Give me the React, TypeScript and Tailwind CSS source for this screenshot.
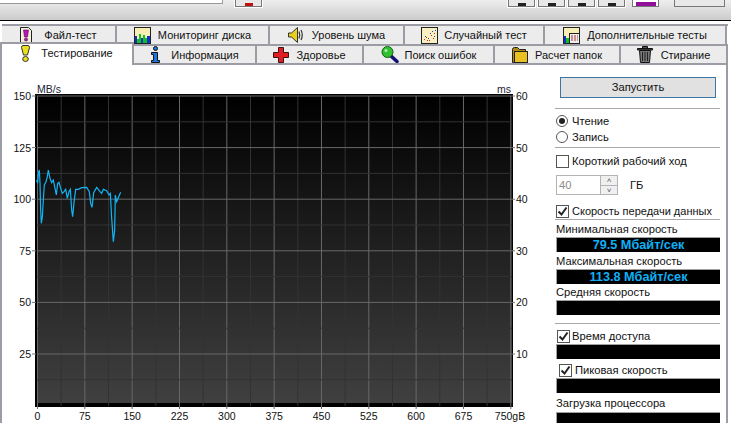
import type { ReactNode } from 'react';

const font = { fontFamily: '"Liberation Sans", Arial, sans-serif' };

const FileIcon = () => (
  <svg width="12" height="17" viewBox="0 0 12 17">
    <path d="M.5 .5h8l3 3v13h-11z" fill="#f4f0dc" stroke="#222" />
    <path d="M3.500 3h5l-1 7h-3z" fill="#c010c0" stroke="#401040" strokeWidth=".6" />
    <circle cx="6" cy="12.500" r="1.600" fill="#c010c0" stroke="#401040" strokeWidth=".6" />
  </svg>
);

const MonitorIcon = () => (
  <svg width="17" height="17" viewBox="0 0 17 17">
    <rect x=".5" y=".5" width="16" height="16" fill="#f6eeb4" stroke="#222" />
    <rect x="1" y="9" width="2" height="7" fill="#1030d0" />
    <rect x="3" y="12" width="2" height="4" fill="#10c020" />
    <rect x="5" y="7" width="2" height="9" fill="#10c020" />
    <rect x="7" y="11" width="2" height="5" fill="#1030d0" />
    <rect x="9" y="8" width="2" height="8" fill="#10c020" />
    <rect x="11" y="11" width="2" height="5" fill="#10c020" />
    <rect x="13" y="9" width="3" height="7" fill="#1030d0" />
  </svg>
);

const SpeakerIcon = () => (
  <svg width="17" height="16" viewBox="0 0 17 16">
    <path d="M.5 6h3l6-5.500v15l-6-5.500h-3z" fill="#e8d020" stroke="#333" />
    <path d="M11 4.500q1.500 3.500 0 7M13 3q2.500 5 0 10" fill="none" stroke="#333" strokeWidth="1.200" />
  </svg>
);

const RandomIcon = () => (
  <svg width="17" height="17" viewBox="0 0 17 17">
    <rect x=".5" y=".5" width="16" height="16" fill="#f8f0c0" stroke="#222" />
    {[[3, 12], [5, 10], [8, 13], [10, 8], [13, 6], [12, 11], [6, 13]].map(([x, y]) => (
      <rect key={`${x}-${y}`} x={x} y={y} width="1" height="1" fill="#e02020" />
    ))}
    {[[4, 9], [7, 11], [9, 6], [11, 4], [13, 9], [14, 3]].map(([x, y]) => (
      <rect key={`${x}-${y}`} x={x} y={y} width="1" height="1" fill="#2040d0" />
    ))}
  </svg>
);

const ExtraIcon = () => (
  <svg width="17" height="17" viewBox="0 0 17 17">
    <rect x=".5" y=".5" width="16" height="16" fill="#f6eeb4" stroke="#222" />
    <rect x="1" y="9" width="2" height="7" fill="#1030d0" />
    <rect x="3" y="11" width="3" height="5" fill="#10c020" />
    <rect x="6.500" y="6.500" width="10" height="10" fill="#eee" stroke="#222" />
    <path d="M8 9h2M11 9h2M14 9h1M8 11h2M11 11h2M14 11h1M8 13h2M11 13h2M14 13h1" stroke="#a03030" />
  </svg>
);

const BulbIcon = () => (
  <svg width="9" height="17" viewBox="0 0 9 17">
    <path d="M2 .5h5q1.500 0 1.500 2L6.500 10h-4L.5 2.500q0-2 1.500-2z" fill="#e8e020" stroke="#333" />
    <ellipse cx="4.500" cy="14" rx="2.800" ry="2.500" fill="#e8e020" stroke="#333" />
  </svg>
);

const InfoIcon = () => (
  <svg width="11" height="17" viewBox="0 0 11 17">
    <circle cx="5.500" cy="2.500" r="2" fill="#1878e0" stroke="#111" />
    <path d="M1.500 6.500h6v8h2v2h-8v-2h2v-6h-2z" fill="#1878e0" stroke="#111" />
  </svg>
);

const CrossIcon = () => (
  <svg width="16" height="16" viewBox="0 0 16 16">
    <path d="M5.500 .5h5v5h5v5h-5v5h-5v-5h-5v-5h5z" fill="#e01c24" stroke="#401010" />
  </svg>
);

const SearchIcon = () => (
  <svg width="18" height="17" viewBox="0 0 18 17">
    <path d="M10 10l6 5.500" stroke="#101070" strokeWidth="3.500" strokeLinecap="round" />
    <circle cx="6.500" cy="6" r="5.500" fill="#30c030" stroke="#106010" />
    <circle cx="5" cy="4.500" r="1.500" fill="#b0f0b0" />
  </svg>
);

const FolderIcon = () => (
  <svg width="16" height="16" viewBox="0 0 16 16">
    <path d="M.5 2.500q0-2 2-2h3l2 2h6v13h-13z" fill="#b08a10" stroke="#222" />
    <rect x="2.500" y="4.500" width="13" height="11" fill="#e8c020" stroke="#222" />
  </svg>
);

const TrashIcon = () => (
  <svg width="16" height="17" viewBox="0 0 16 17">
    <path d="M.5 2.500h15v1.500h-15zM5.500 2.500v-2h5v2" fill="#555" stroke="#111" />
    <path d="M2.500 4.500h11l-1 12h-9z" fill="#777" stroke="#111" />
    <path d="M5.500 6v9M8 6v9M10.500 6v9" stroke="#222" />
  </svg>
);

const topTabs = [
  { label: 'Файл-тест', w: 'w-[115px]', gap: 'gap-[12px]', icon: <FileIcon /> },
  { label: 'Мониторинг диска', w: 'w-[153px]', gap: 'gap-[7px]', icon: <MonitorIcon /> },
  { label: 'Уровень шума', w: 'w-[135px]', gap: 'gap-[7px]', icon: <SpeakerIcon /> },
  { label: 'Случайный тест', w: 'w-[140px]', gap: 'gap-[6px]', icon: <RandomIcon /> },
  { label: 'Дополнительные тесты', w: 'w-[182px]', gap: 'gap-[7px]', icon: <ExtraIcon /> },
];

const bottomTabs = [
  { label: 'Информация', w: 'w-[123px]', gap: 'gap-[10px]', icon: <InfoIcon /> },
  { label: 'Здоровье', w: 'w-[107px]', gap: 'gap-[7px]', icon: <CrossIcon /> },
  { label: 'Поиск ошибок', w: 'w-[131px]', gap: 'gap-[6px]', icon: <SearchIcon /> },
  { label: 'Расчет папок', w: 'w-[126px]', gap: 'gap-[7px]', icon: <FolderIcon /> },
  { label: 'Стирание', w: 'w-[107px]', gap: 'gap-[8px]', icon: <TrashIcon /> },
];

const Tab = ({ label, w, gap, icon }: { label: string; w: string; gap: string; icon: ReactNode }) => (
  <div className={`${w} ${gap} flex items-center justify-center border-r-2 border-[#9c9ca4] bg-[#ececec] text-[11px] text-[#111]`}>
    {icon}
    <span>{label}</span>
  </div>
);

// raw trace, read off the graph
const trace = [
  [110, 90], [113, 100], [115, 70], [118, 60], [120, 100], [122, 180], [124, 220], [127, 200], [130, 150], [133, 105],
  [138, 95], [142, 80], [145, 60], [150, 85], [155, 98], [160, 90], [164, 110], [169, 135], [173, 100], [177, 97],
  [182, 115], [187, 130], [192, 125], [197, 118], [202, 145], [207, 125], [211, 118], [215, 180], [218, 200], [222, 158],
  [227, 118], [235, 118], [245, 113], [260, 112], [268, 125], [272, 160], [276, 172], [281, 128], [290, 112], [300, 125],
  [305, 130], [310, 118], [320, 122], [327, 135], [331, 130], [335, 205], [340, 275], [344, 240], [346, 135], [350, 155],
  [356, 140], [362, 127],
];

const xStep = 47.33;
const yStep = 51.6;
const x0 = 37.5;
const y0 = 96;

const Chart = () => {
  const xs = Array.from({ length: 21 }, (_, i) => x0 + (i * xStep) / 2);
  const ys = Array.from({ length: 12 }, (_, i) => y0 + (i * yStep) / 2);
  return (
    <svg width="553" height="358" viewBox="2 65 553 358" className="shrink-0" style={font}>
      <defs>
        <linearGradient id="plot" x1="0" y1="0" x2="0" y2="1">
          <stop offset="0" stopColor="#000" />
          <stop offset="1" stopColor="#404040" />
        </linearGradient>
      </defs>
      <rect x="35" y="94" width="478" height="313" fill="#000" />
      <rect x="37" y="96" width="475" height="307" fill="url(#plot)" />
      {xs.map((x, i) => (
        <line key={i} x1={x} y1="96" x2={x} y2={i % 2 ? 406 : 409} stroke={i % 2 ? '#333' : '#686868'} />
      ))}
      {ys.map((y, i) => (
        <line key={i} x1="37" y1={y} x2="512" y2={y} stroke={i % 2 ? '#333' : '#686868'} />
      ))}
      <polyline
        points={trace.map(([x, y]) => `${x / 3},${150 + y / 3}`).join(' ')}
        fill="none"
        stroke="#12b4f4"
        strokeWidth="1.200"
      />
      {[150, 125, 100, 75, 50, 25].map((v, i) => (
        <g key={v}>
          <line x1="32" x2="36" y1={y0 + i * yStep} y2={y0 + i * yStep} stroke="#777" />
          <text x="31" y={y0 + i * yStep + 4} textAnchor="end" fontSize="10.5" fill="#111">{v}</text>
        </g>
      ))}
      {[60, 50, 40, 30, 20, 10].map((v, i) => (
        <g key={v}>
          <line x1="512" x2="515" y1={y0 + i * yStep} y2={y0 + i * yStep} stroke="#777" />
          <text x="516" y={y0 + i * yStep + 4} fontSize="10.5" fill="#111">{v}</text>
        </g>
      ))}
      {Array.from({ length: 10 }, (_, i) => i * 75).map((v, i) => (
        <text key={v} x={x0 + i * xStep} y="420" textAnchor="middle" fontSize="10.5" fill="#111">{v}</text>
      ))}
      <text x={x0 + 10 * xStep - 16} y="420" fontSize="10.5" fill="#111">750gB</text>
      <text x="37" y="93" fontSize="10.5" fill="#223">MB/s</text>
      <text x="497" y="93" fontSize="10.5" fill="#223">ms</text>
    </svg>
  );
};

const Check = ({ checked }: { checked?: boolean }) => (
  <span className="flex size-[13px] shrink-0 items-center justify-center border border-[#555] bg-white">
    {checked && (
      <svg width="11" height="11" viewBox="0 0 11 11">
        <path d="M1.500 5.500l3 3 5-7" fill="none" stroke="#222" strokeWidth="2" />
      </svg>
    )}
  </span>
);

const Radio = ({ checked }: { checked?: boolean }) => (
  <span className="flex size-[12px] shrink-0 items-center justify-center rounded-full border border-[#555] bg-white">
    {checked && <span className="size-[6px] rounded-full bg-[#222]" />}
  </span>
);

const Bar = ({ value, className = '' }: { value?: string; className?: string }) => (
  <div className={`ml-px flex h-[15px] shrink-0 items-center justify-center border-t border-l border-[#a0a0a0] bg-black text-[12.7px] leading-none font-bold text-[#0fb0f5] ${className}`}>
    {value}
  </div>
);

const Label = ({ children, className = '' }: { children: ReactNode; className?: string }) => (
  <div className={`ml-px h-[15px] shrink-0 text-[11.2px] leading-[15px] whitespace-nowrap text-[#111] ${className}`}>{children}</div>
);

const Divider = ({ className = '' }: { className?: string }) => <div className={`h-px shrink-0 bg-[#a8a8a8] ${className}`} />;

const SidePanel = () => (
  <div className="flex h-[358px] w-[165px] shrink-0 flex-col overflow-hidden pt-[12px] text-[11.2px]">
    <button className="ml-[5px] h-[21px] w-[156px] shrink-0 border border-[#3a76a6] bg-[#e1e1e1] text-[11.2px] text-[#111]">Запустить</button>
    <Divider className="mt-[10px]" />
    <div className="mt-[5px] ml-px flex h-[14px] shrink-0 items-center gap-[4px]"><Radio checked />Чтение</div>
    <div className="mt-[2px] ml-px flex h-[14px] shrink-0 items-center gap-[4px]"><Radio />Запись</div>
    <Divider className="mt-[3px]" />
    <div className="mt-[7px] ml-px flex h-[13px] shrink-0 items-center gap-[3px] whitespace-nowrap"><Check />Короткий рабочий ход</div>
    <div className="mt-[7px] ml-px flex h-[20px] shrink-0 items-center">
      <div className="flex h-full w-[62px] border border-[#b4b4b4]">
        <span className="flex-1 pl-[2px] leading-[18px] text-[#8a8a8a]">40</span>
        <div className="flex w-[17px] flex-col border-l border-[#b4b4b4] bg-[#f0f0f0] text-center text-[8px] leading-[9px] text-[#555]">
          <span className="h-[9px]">˄</span>
          <span className="h-[9px] border-t border-[#b4b4b4]">˅</span>
        </div>
      </div>
      <span className="ml-[12px]">ГБ</span>
    </div>
    <div className="mt-[10px] ml-px flex h-[13px] shrink-0 items-center gap-[3px] text-[11px] whitespace-nowrap"><Check checked />Скорость передачи данных</div>
    <Divider className="mt-px" />
    <Label className="mt-[2px]">Минимальная скорость</Label>
    <Bar value="79.5 Мбайт/сек" />
    <Label className="mt-[2px]">Максимальная скорость</Label>
    <Bar value="113.8 Мбайт/сек" />
    <Label className="mt-px">Средняя скорость</Label>
    <Bar />
    <Divider className="mt-[8px]" />
    <div className="mt-[6px] ml-[2px] flex h-[13px] shrink-0 items-center gap-[2px]"><Check checked />Время доступа</div>
    <Bar className="mt-px" />
    <div className="mt-[5px] ml-[4px] flex h-[13px] shrink-0 items-center gap-[3px]"><Check checked />Пиковая скорость</div>
    <Bar className="mt-px" />
    <Label className="mt-[3px]">Загрузка процессора</Label>
    <Bar className="mt-px" />
  </div>
);

const toolButtons = [
  'ml-[12px] w-[27px]',
  'ml-[246px] w-[27px]',
  'ml-[3px] w-[27px]',
  'ml-[3px] w-[27px]',
  'ml-[3px] w-[27px]',
];

export default function App() {
  return (
    <div className="h-[423px] w-[731px] overflow-hidden bg-white" style={font}>
      <div className="flex h-[21px] items-start border-b border-black bg-gradient-to-b from-[#eeeeee] to-[#cccccc]">
        <div className="h-[4px] w-[223px] border-r border-b border-[#999] bg-white" />
        {toolButtons.map((c, i) => (
          <div key={i} className={`${c} flex h-[7px] items-end justify-center border-x border-b border-[#777] bg-[#e8e8e8] outline outline-white`}>
            <span className={`h-[3px] w-[8px] ${i === 0 ? 'bg-[#c01010]' : 'bg-[#222]'}`} />
          </div>
        ))}
        <div className="ml-[7px] flex h-[7px] w-[27px] items-end justify-center border-x border-b border-[#777] bg-white">
          <span className="h-[4px] w-[20px] bg-[#90109a]" />
        </div>
        <div className="ml-[15px] h-[7px] w-[51px] border-x border-b border-[#777] bg-[#e8e8e8]" />
      </div>
      <div className="h-[3px]" />
      <div className="ml-[2px] flex h-[20px] w-[726px] border-t-2 border-[#9c9ca4]">
        {topTabs.map((t) => (
          <Tab key={t.label} {...t} />
        ))}
      </div>
      <div className="flex h-[21px] w-[728px]">
        <div className="relative z-10 -mt-[2px] flex h-[23px] w-[134px] items-center justify-center gap-[11px] border-x-2 border-t-2 border-[#9c9ca4] bg-white pb-[3px] text-[11px] text-[#111]">
          <BulbIcon />
          <span>Тестирование</span>
        </div>
        <div className="flex flex-1 border-y-2 border-[#9c9ca4] [&_span]:pt-[2px]">
          {bottomTabs.map((t) => (
            <Tab key={t.label} {...t} />
          ))}
        </div>
      </div>
      <div className="flex h-[358px] w-[728px] border-x-2 border-[#9c9ca4] text-[#111]">
        <Chart />
        <SidePanel />
      </div>
    </div>
  );
}
